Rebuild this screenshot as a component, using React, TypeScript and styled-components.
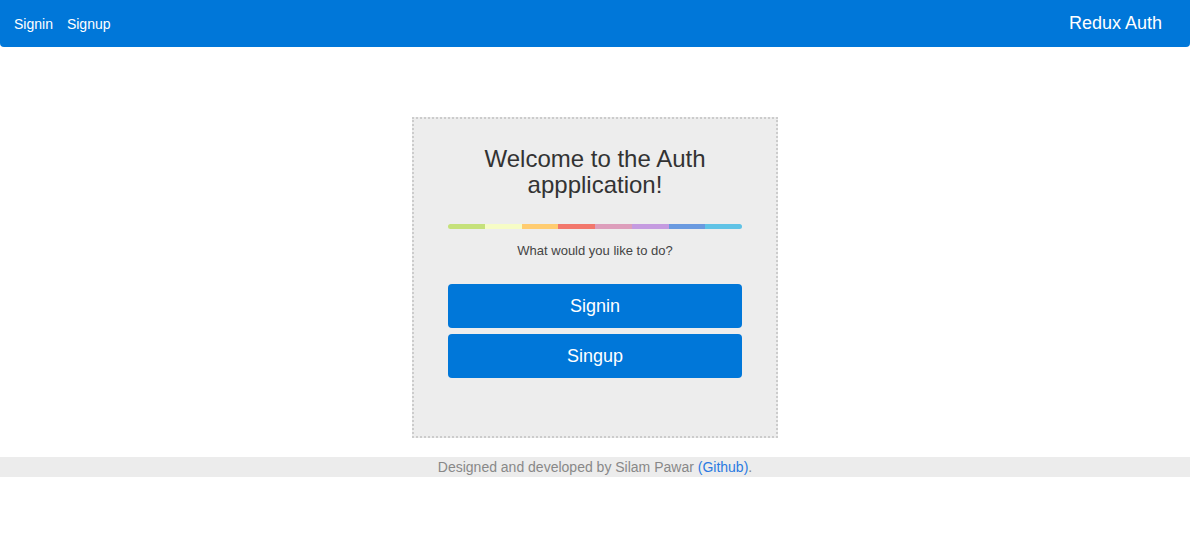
import React from 'react';
import styled, { createGlobalStyle } from 'styled-components';

const colors = {
    blue: '#0077d9',
    text: '#333333',
    card: '#ededed',
    border: '#cccccc',
    footer: '#ececec',
    muted: '#888888',
    link: '#2a7ae2',
};

const rainbow = ['#c5e17a', '#f6fcc6', '#ffcc70', '#f2776c', '#dd9ebb', '#c59be0', '#6a9ae0', '#60c3e6'];

const GlobalStyle = createGlobalStyle`
    body {
        margin: 0;
        background: #ffffff;
        font-family: 'Liberation Sans', Arial, sans-serif;
    }
`;

const App = (): JSX.Element => {
    return (
        <>
            <GlobalStyle />
            <SHeader>
                <SNav>
                    <SNavLink href="#">Signin</SNavLink>
                    <SNavLink href="#">Signup</SNavLink>
                </SNav>
                <SBrand>Redux Auth</SBrand>
            </SHeader>
            <SMain>
                <SCard>
                    <STitle>Welcome to the Auth appplication!</STitle>
                    <SRainbow>
                        {rainbow.map((c) => <SStripe key={c} color={c} />)}
                    </SRainbow>
                    <SQuestion>What would you like to do?</SQuestion>
                    <SButtons>
                        <SButton type="button">Signin</SButton>
                        <SButton type="button">Singup</SButton>
                    </SButtons>
                </SCard>
            </SMain>
            <SFooter>
                Designed and developed by Silam Pawar <SLink href="#">(Github)</SLink>.
            </SFooter>
        </>
    );
};

const SHeader = styled.header`
    display: flex;
    align-items: center;
    justify-content: space-between;
    height: 47px;
    padding: 0 28px 0 14px;
    background: ${colors.blue};
    border-radius: 0 0 4px 4px;
`;

const SNav = styled.nav`
    display: flex;
    gap: 14px;
`;

const SNavLink = styled.a`
    color: #ffffff;
    font-size: 14px;
    text-decoration: none;
`;

const SBrand = styled.span`
    color: #ffffff;
    font-size: 18px;
`;

const SMain = styled.main`
    display: flex;
    justify-content: center;
    padding: 70px 0 19px;
`;

const SCard = styled.div`
    width: 366px;
    height: 321px;
    box-sizing: border-box;
    padding: 27px 34px 0;
    background: ${colors.card};
    border: 2px dotted ${colors.border};
    display: flex;
    flex-direction: column;
    align-items: stretch;
`;

const STitle = styled.h1`
    margin: 0 10px;
    font-size: 24px;
    font-weight: normal;
    line-height: 26px;
    text-align: center;
    color: ${colors.text};
`;

const SRainbow = styled.div`
    display: flex;
    height: 5px;
    margin-top: 26px;
    border-radius: 3px;
    overflow: hidden;
`;

const SStripe = styled.span<{ color: string }>`
    flex: 1;
    background: ${(props) => props.color};
`;

const SQuestion = styled.p`
    margin: 14px 0 0;
    font-size: 13px;
    line-height: 15px;
    text-align: center;
    color: #444444;
`;

const SButtons = styled.div`
    display: flex;
    flex-direction: column;
    gap: 6px;
    margin-top: 26px;
`;

const SButton = styled.button`
    height: 44px;
    border: none;
    border-radius: 4px;
    background: ${colors.blue};
    color: #ffffff;
    font-family: 'Liberation Sans', Arial, sans-serif;
    font-size: 18px;
    cursor: pointer;
`;

const SFooter = styled.footer`
    height: 20px;
    line-height: 20px;
    background: ${colors.footer};
    color: ${colors.muted};
    font-size: 14px;
    text-align: center;
`;

const SLink = styled.a`
    color: ${colors.link};
    text-decoration: none;
`;

export default App;
